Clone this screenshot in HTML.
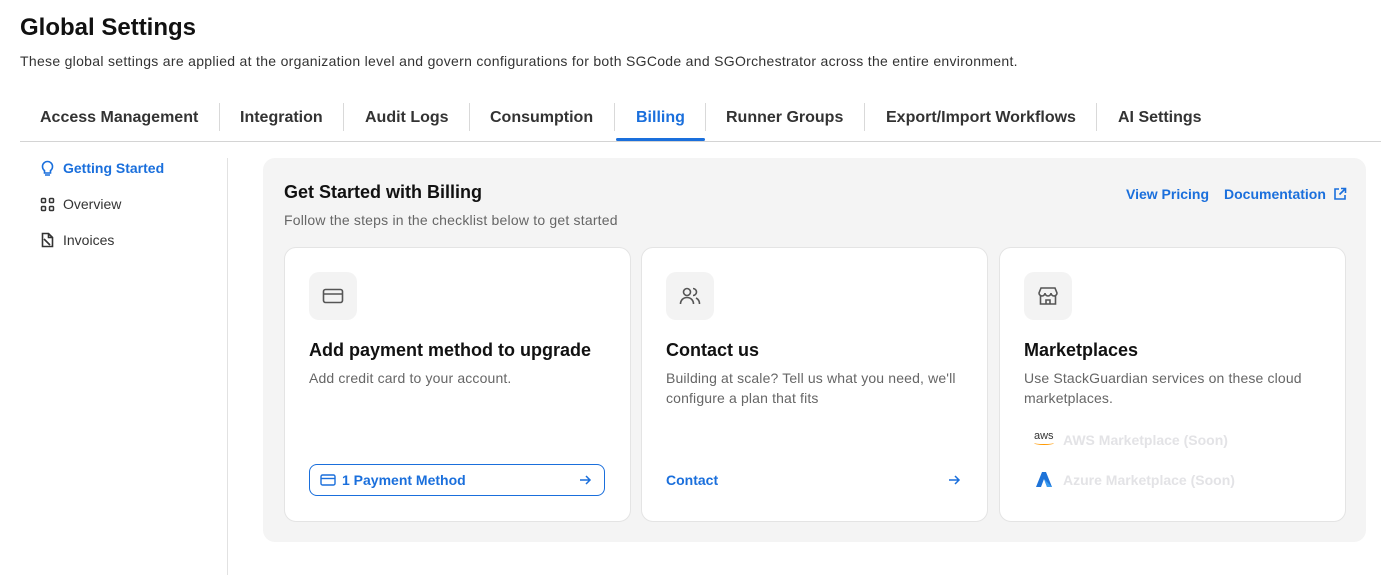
<!DOCTYPE html>
<html><head><meta charset="utf-8"><style>
*{box-sizing:border-box;margin:0;padding:0}
body{width:1393px;height:575px;background:#fff;font-family:"Liberation Sans",sans-serif;color:#111;position:relative;overflow:hidden}
.a{position:absolute;white-space:nowrap}
.tab{position:absolute;top:109px;font-size:16px;font-weight:bold;color:#333}
.sep{position:absolute;top:103px;width:1px;height:28px;background:#d9d9d9}
.side{position:absolute;left:40px;font-size:14px;color:#333;display:flex;align-items:center;gap:8px}
.card{position:absolute;top:247px;width:347px;height:275px;background:#fff;border:1.5px solid #e4e4e4;border-radius:12px}
.ib{position:absolute;left:24px;top:24px;width:48px;height:48px;background:#f3f3f3;border-radius:10px;display:flex;align-items:center;justify-content:center}
.ct{position:absolute;left:24px;top:92px;font-size:18px;font-weight:bold;color:#111}
.cd{position:absolute;left:24px;top:120px;font-size:14px;line-height:20px;color:#666;letter-spacing:0.15px}
.blue{color:#1a6fdc}
</style></head><body>
<div class="a" style="left:20px;top:14px;font-size:24px;font-weight:bold">Global Settings</div>
<div class="a" style="left:20px;top:53px;font-size:14px;color:#333;letter-spacing:0.3px">These global settings are applied at the organization level and govern configurations for both SGCode and SGOrchestrator across the entire environment.</div>
<div class="tab" style="left:40px">Access Management</div>
<div class="sep" style="left:219px"></div>
<div class="tab" style="left:240px">Integration</div>
<div class="sep" style="left:343px"></div>
<div class="tab" style="left:365px">Audit Logs</div>
<div class="sep" style="left:469px"></div>
<div class="tab" style="left:490px">Consumption</div>
<div class="sep" style="left:614px"></div>
<div class="tab blue" style="left:636px">Billing</div>
<div class="sep" style="left:705px"></div>
<div class="tab" style="left:726px">Runner Groups</div>
<div class="sep" style="left:864px"></div>
<div class="tab" style="left:886px">Export/Import Workflows</div>
<div class="sep" style="left:1096px"></div>
<div class="tab" style="left:1118px">AI Settings</div>
<div class="a" style="left:20px;top:141px;width:1361px;height:1px;background:#d4d4d4"></div>
<div class="a" style="left:616px;top:138px;width:89px;height:3px;background:#1a6fdc;border-radius:2px"></div>

<div class="side blue" style="top:160px;font-weight:bold"><svg width="15" height="16" viewBox="0 0 15 16" fill="none" stroke="#1a6fdc" stroke-width="1.6"><path d="M4.5 10.5C3 9.5 2.5 8 2.5 6.5a5 5 0 0110 0c0 1.5-.5 3-2 4V13h-6z M5 15h5"/></svg>Getting Started</div>
<div class="side" style="top:196px"><svg width="15" height="15" viewBox="0 0 15 15" fill="none" stroke="#333" stroke-width="1.5"><rect x="1.5" y="1.5" width="4" height="4" rx="1"/><rect x="9.5" y="1.5" width="4" height="4" rx="1"/><rect x="1.5" y="9.5" width="4" height="4" rx="1"/><rect x="9.5" y="9.5" width="4" height="4" rx="1"/></svg>Overview</div>
<div class="side" style="top:232px"><svg width="15" height="16" viewBox="0 0 15 16" fill="none" stroke="#333" stroke-width="1.6"><path d="M2.5 1.5h6l4 4v9h-10z M8.5 1.5v4h4 M4 7l6 6"/></svg>Invoices</div>
<div class="a" style="left:227px;top:158px;width:1px;height:417px;background:#e2e2e2"></div>

<div class="a" style="left:263px;top:158px;width:1103px;height:384px;background:#f4f4f4;border-radius:12px"></div>
<div class="a" style="left:284px;top:182px;font-size:18px;font-weight:bold">Get Started with Billing</div>
<div class="a" style="left:284px;top:212px;font-size:14px;color:#666;letter-spacing:0.2px">Follow the steps in the checklist below to get started</div>
<div class="a blue" style="left:1126px;top:186px;font-size:14px;font-weight:bold">View Pricing</div>
<div class="a blue" style="left:1224px;top:186px;font-size:14px;font-weight:bold;display:flex;gap:7px;align-items:center">Documentation<svg width="14" height="14" viewBox="0 0 14 14" fill="none" stroke="#1a6fdc" stroke-width="1.6"><path d="M6 2H2v10h10V8 M8 1.5h4.5V6 M12.5 1.5L6.5 7.5"/></svg></div>

<div class="card" style="left:284px">
 <div class="ib"><svg width="24" height="24" viewBox="0 0 24 24" fill="none" stroke="#555" stroke-width="1.6"><rect x="2.5" y="5.5" width="19" height="13" rx="2"/><path d="M2.5 10h19"/></svg></div>
 <div class="ct">Add payment method to upgrade</div>
 <div class="cd">Add credit card to your account.</div>
 <div class="a blue" style="left:24px;top:216px;width:296px;height:32px;border:1.3px solid #1a6fdc;border-radius:8px;font-size:14px;font-weight:bold;display:flex;align-items:center;padding:0 12px 0 10px;gap:6px"><svg width="16" height="14" viewBox="0 0 16 14" fill="none" stroke="#1a6fdc" stroke-width="1.4"><rect x="1" y="2" width="14" height="10" rx="1.5"/><path d="M1 5.5h14"/></svg>1 Payment Method<svg style="margin-left:auto" width="14" height="14" viewBox="0 0 14 14" fill="none" stroke="#1a6fdc" stroke-width="1.5"><path d="M2 7h10 M8 3l4 4-4 4"/></svg></div>
</div>
<div class="card" style="left:641px">
 <div class="ib"><svg width="24" height="24" viewBox="0 0 24 24" fill="none" stroke="#555" stroke-width="1.6"><circle cx="9" cy="8" r="3.5"/><path d="M2.5 20c0-4 3-6.5 6.5-6.5s6.5 2.5 6.5 6.5 M15 4.5a3.5 3.5 0 010 7 M18 14c2 1 3.5 3 3.5 6"/></svg></div>
 <div class="ct">Contact us</div>
 <div class="cd">Building at scale? Tell us what you need, we'll<br>configure a plan that fits</div>
 <div class="a blue" style="left:24px;top:224px;font-size:14px;font-weight:bold">Contact</div>
 <svg class="a" style="left:305px;top:225px" width="14" height="14" viewBox="0 0 14 14" fill="none" stroke="#1a6fdc" stroke-width="1.5"><path d="M2 7h10 M8 3l4 4-4 4"/></svg>
</div>
<div class="card" style="left:999px">
 <div class="ib"><svg width="24" height="24" viewBox="0 0 24 24" fill="none" stroke="#555" stroke-width="1.6"><path d="M5 4h14l2 5a3 3 0 01-6 0a3 3 0 01-6 0a3 3 0 01-6 0z M4.5 11v9h15v-9 M10 20v-4h4v4"/></svg></div>
 <div class="ct">Marketplaces</div>
 <div class="cd">Use StackGuardian services on these cloud<br>marketplaces.</div>
 <div class="a" style="left:34px;top:183px;font-size:11px;color:#333;line-height:10px">aws<div style="width:20px;height:4px;border-bottom:1.5px solid #f90;border-radius:0 0 50% 50%"></div></div>
 <div class="a" style="left:63px;top:184px;font-size:14px;font-weight:bold;color:#e3e3e6">AWS Marketplace (Soon)</div>
 <svg class="a" style="left:36px;top:224px" width="16" height="15" viewBox="0 0 16 15"><path d="M6 0h4l6 15h-5L8 7 5 15H0z" fill="#1e73d8"/><path d="M8 7l3 8h5z" fill="#3b9cf0"/></svg>
 <div class="a" style="left:63px;top:224px;font-size:14px;font-weight:bold;color:#e3e3e6">Azure Marketplace (Soon)</div>
</div>
</body></html>
